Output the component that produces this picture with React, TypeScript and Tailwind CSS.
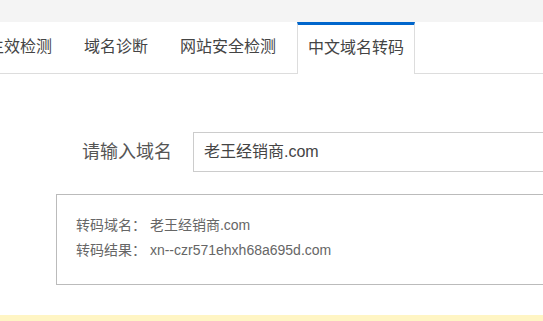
const font = { fontFamily: '"Liberation Sans", "Noto Sans CJK SC", sans-serif' }

const tabs = ['生效检测', '域名诊断', '网站安全检测']

export default function App() {
  return (
    <div className="w-[543px] h-[321px] overflow-hidden bg-white" style={font}>
      <div className="h-[22px] bg-[#f4f4f4]" />

      {/* tab bar */}
      <div className="flex h-[52px] border-b border-[#dddddd] -ml-[28px]">
        {tabs.map((t) => (
          <div
            key={t}
            className="px-4 shrink-0 flex items-center text-[16px] leading-[20px] text-[#444] whitespace-nowrap pb-[2px]"
          >
            {t}
          </div>
        ))}
        <div className="ml-[5px] shrink-0 w-[118px] -mb-px bg-white border-t-[3px] border-t-[#0066cc] border-x border-x-[#dddddd] flex items-center justify-center text-[16px] leading-[20px] text-[#444] whitespace-nowrap pb-[3px]">
          中文域名转码
        </div>
      </div>

      {/* input row */}
      <div className="flex items-center mt-[58px] pl-[82px]">
        <div className="w-[111px] shrink-0 text-[18px] leading-[22px] text-[#555] whitespace-nowrap">
          请输入域名
        </div>
        <div className="w-[420px] h-[40px] shrink-0 border border-[#cccccc] flex items-center pl-[10px] text-[16px] text-[#444] whitespace-nowrap">
          老王经销商.com
        </div>
      </div>

      {/* result box */}
      <div className="ml-[56px] mt-[22px] w-[560px] h-[91px] border border-[#bbbbbb] pt-[18px] pl-[19px] text-[14px] leading-[25px] text-[#666]">
        <div className="whitespace-nowrap">转码域名： 老王经销商.com</div>
        <div className="whitespace-nowrap">转码结果： xn--czr571ehxh68a695d.com</div>
      </div>

      <div className="mt-[30px] h-[10px] bg-[#fff5c4]" />
    </div>
  )
}
